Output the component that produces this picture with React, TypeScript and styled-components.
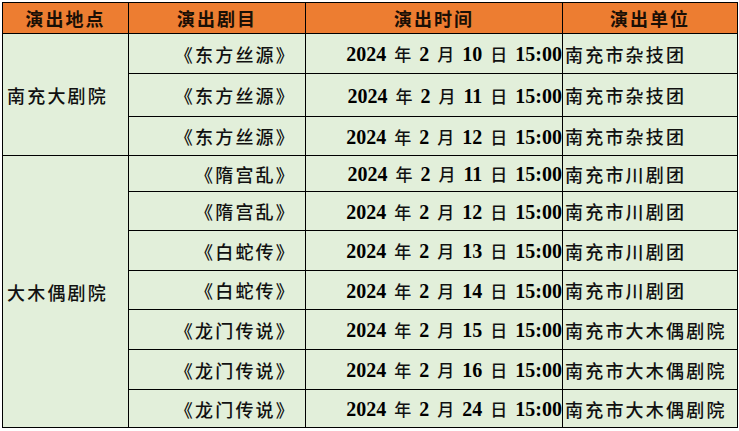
import React from "react";
import styled, { createGlobalStyle } from "styled-components";

const Global = createGlobalStyle`
  html, body { margin: 0; padding: 0; background: #ffffff; }
  body { font-family: "Liberation Serif", "Noto Sans CJK SC", serif; color: #000; }
`;

const Page = styled.div`
  padding: 2px 0 0 2px;
`;

const Table = styled.table`
  border-collapse: collapse;
  table-layout: fixed;
  width: 735px;
  background: #e2efda;
`;

const Row = styled.tr<{ $h: number }>`
  height: ${(p) => p.$h}px;
`;

const HeadCell = styled.th`
  background: #ed7d31;
  border: 1px solid #000;
  padding: 0;
  font-family: "Noto Sans CJK SC", sans-serif;
  font-weight: 700;
  font-size: 18px;
  letter-spacing: 2px;
  text-align: center;
  color: #1a0f05;
`;

const Cell = styled.td<{ $align: "left" | "right" | "center"; $pad?: string }>`
  border: 1px solid #000;
  padding: ${(p) => p.$pad ?? "0"};
  text-align: ${(p) => p.$align};
  vertical-align: middle;
  white-space: nowrap;
  overflow: hidden;
  font-family: "Noto Sans CJK SC", sans-serif;
  font-size: 18px;
  font-weight: 500;
  letter-spacing: 2.2px;
  color: #111;
`;

const DateCell = styled.td`
  border: 1px solid #000;
  padding: 0;
  text-align: right;
  vertical-align: middle;
  white-space: nowrap;
  font-family: "Liberation Serif", serif;
  font-size: 20px;
  font-weight: 700;
  word-spacing: 3px;
  color: #000;
`;

const Han = styled.span`
  font-family: "Noto Sans CJK SC", sans-serif;
  font-weight: 500;
  font-size: 17px;
  color: #111;
`;

const rows = [
  { venue: "南充大剧院", span: 3, title: "《东方丝源》", day: 10, unit: "南充市杂技团", h: 40 },
  { title: "《东方丝源》", day: 11, unit: "南充市杂技团", h: 43 },
  { title: "《东方丝源》", day: 12, unit: "南充市杂技团", h: 39 },
  { venue: "大木偶剧院", span: 7, title: "《隋宫乱》", day: 11, unit: "南充市川剧团", h: 36 },
  { title: "《隋宫乱》", day: 12, unit: "南充市川剧团", h: 39 },
  { title: "《白蛇传》", day: 13, unit: "南充市川剧团", h: 40 },
  { title: "《白蛇传》", day: 14, unit: "南充市川剧团", h: 39 },
  { title: "《龙门传说》", day: 15, unit: "南充市大木偶剧院", h: 40 },
  { title: "《龙门传说》", day: 16, unit: "南充市大木偶剧院", h: 40 },
  { title: "《龙门传说》", day: 24, unit: "南充市大木偶剧院", h: 38 },
];

function DateText({ day }: { day: number }) {
  return (
    <>
      2024 <Han>年</Han> 2 <Han>月</Han> {day} <Han>日</Han> 15:00
    </>
  );
}

export default function App() {
  return (
    <Page>
      <Global />
      <Table>
        <colgroup>
          <col style={{ width: 126 }} />
          <col style={{ width: 177 }} />
          <col style={{ width: 257 }} />
          <col style={{ width: 175 }} />
        </colgroup>
        <thead>
          <Row $h={31}>
            <HeadCell>演出地点</HeadCell>
            <HeadCell>演出剧目</HeadCell>
            <HeadCell>演出时间</HeadCell>
            <HeadCell>演出单位</HeadCell>
          </Row>
        </thead>
        <tbody>
          {rows.map((r, i) => (
            <Row $h={r.h} key={i}>
              {r.venue && (
                <Cell rowSpan={r.span} $align="left" $pad="0 0 0 4px">
                  {r.venue}
                </Cell>
              )}
              <Cell $align="right" $pad="0 9px 0 0">
                {r.title}
              </Cell>
              <DateCell>
                <DateText day={r.day} />
              </DateCell>
              <Cell $align="left" $pad="0 0 0 2px">
                {r.unit}
              </Cell>
            </Row>
          ))}
        </tbody>
      </Table>
    </Page>
  );
}
